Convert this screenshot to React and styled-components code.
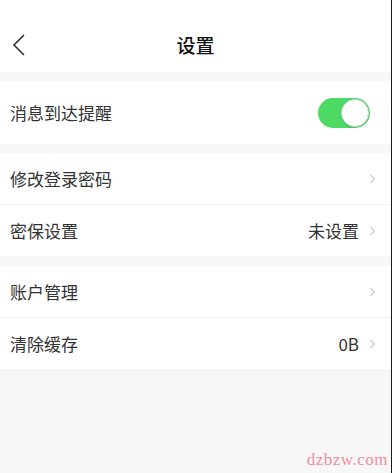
import React, { useState } from 'react';
import styled, { createGlobalStyle } from 'styled-components';

const GlobalStyle = createGlobalStyle`
  html, body {
    margin: 0;
    padding: 0;
    background: #f7f7f7;
  }
  body {
    font-family: "Noto Sans CJK SC", "Noto Sans", sans-serif;
  }
`;

const Page = styled.div`
  position: relative;
  width: 391px;
  height: 473px;
  background: #f7f7f7;
  border-right: 1px solid #1a1a1a;
  overflow: hidden;
`;

const Header = styled.div`
  position: relative;
  box-sizing: border-box;
  height: 72px;
  padding-top: 17px;
  background: #fff;
  display: flex;
  align-items: center;
  justify-content: center;
`;

const BackButton = styled.button`
  position: absolute;
  left: 12px;
  top: 33px;
  background: none;
  border: none;
  padding: 0;
  display: flex;
  cursor: pointer;
`;

const Title = styled.h1`
  margin: 0;
  font-size: 19px;
  font-weight: 500;
  color: #111;
`;

const Group = styled.div`
  margin-top: ${(p) => p.$gap || 9}px;
  background: #fff;
`;

const Row = styled.div`
  height: ${(p) => p.$height || 51}px;
  display: flex;
  align-items: center;
  padding: 0 10px;
  border-top: ${(p) => (p.$divider ? '1px solid #f1f1f1' : 'none')};
`;

const Label = styled.span`
  flex: 1;
  font-size: 17px;
  color: #333;
`;

const Value = styled.span`
  font-size: 17px;
  color: #333;
  margin-right: 10px;
`;

const Chevron = styled.svg`
  width: 7px;
  height: 10px;
  margin-right: 5px;
`;

const Track = styled.button`
  position: relative;
  width: 52px;
  height: 30px;
  border-radius: 15px;
  border: none;
  padding: 0;
  margin-right: 11px;
  background: ${(p) => (p.$on ? '#4cd964' : '#e5e5e5')};
  cursor: pointer;
`;

const Knob = styled.span`
  position: absolute;
  top: 1px;
  left: ${(p) => (p.$on ? '23px' : '1px')};
  width: 28px;
  height: 28px;
  border-radius: 50%;
  background: #fff;
  box-sizing: border-box;
  border: 1px solid #d6d6d6;
  box-shadow: 0 1px 2px rgba(0, 0, 0, 0.12);
`;

const Watermark = styled.div`
  position: absolute;
  right: 3px;
  bottom: 3px;
  font-family: "Liberation Serif", serif;
  font-size: 17px;
  color: #ea8fa0;
  letter-spacing: 0.5px;
`;

function Arrow() {
  return (
    <Chevron viewBox="0 0 7 10">
      <path d="M1.5 1 L5.5 5 L1.5 9" fill="none" stroke="#a8a8a8" strokeWidth="1" />
    </Chevron>
  );
}

function SettingRow({ label, value, divider }) {
  return (
    <Row $divider={divider}>
      <Label>{label}</Label>
      {value && <Value>{value}</Value>}
      <Arrow />
    </Row>
  );
}

export default function App() {
  const [notify, setNotify] = useState(true);

  return (
    <Page>
      <GlobalStyle />
      <Header>
        <BackButton>
          <svg width="14" height="24" viewBox="0 0 14 24">
            <path d="M12 2 L2 12 L12 22" fill="none" stroke="#333" strokeWidth="1.6" />
          </svg>
        </BackButton>
        <Title>设置</Title>
      </Header>

      <Group>
        <Row $height={63}>
          <Label>消息到达提醒</Label>
          <Track $on={notify} onClick={() => setNotify(!notify)}>
            <Knob $on={notify} />
          </Track>
        </Row>
      </Group>

      <Group>
        <SettingRow label="修改登录密码" />
        <SettingRow label="密保设置" value="未设置" divider />
      </Group>

      <Group $gap={10}>
        <SettingRow label="账户管理" />
        <SettingRow label="清除缓存" value="0B" divider />
      </Group>

      <Watermark>dzbzw.com</Watermark>
    </Page>
  );
}
